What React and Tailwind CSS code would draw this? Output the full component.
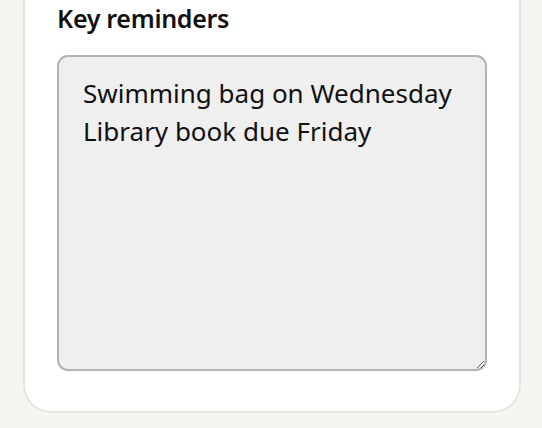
export default function App() {
  return (
    <div className="min-h-screen bg-[#f6f5f1] pl-[23px] pr-[21px] pb-[16px]" style={{ fontFamily: "'Noto Sans', sans-serif" }}>
      <div className="bg-white border-x-2 border-b-2 border-[#e6e4df] rounded-b-[28px] px-[32px] pb-[40px]">
        <h2 className="text-[25px] font-semibold text-[#111] leading-[36px] pt-0 mb-[19px] tracking-[-0.3px]">Key reminders</h2>
        <textarea
          className="block w-full h-[316px] bg-[#efefef] border-2 border-[#b3b3b3] rounded-[11px] px-[24px] py-[17px] text-[26px] leading-[38px] text-[#111] outline-none"
          defaultValue={"Swimming bag on Wednesday\nLibrary book due Friday"}
          style={{ fontFamily: "'Noto Sans', sans-serif" }}
        />
      </div>
    </div>
  );
}
